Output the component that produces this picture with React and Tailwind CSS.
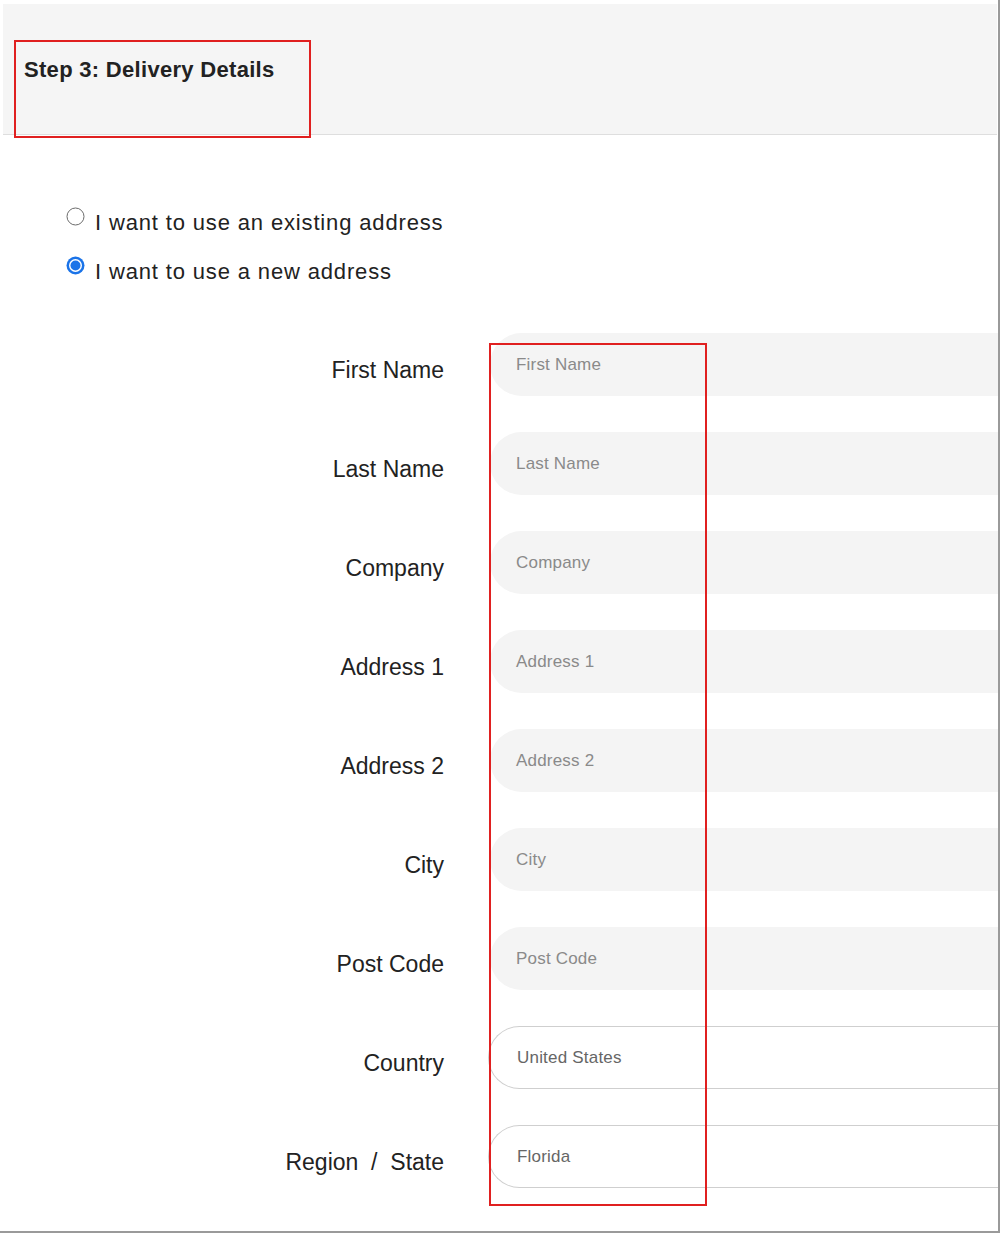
import React from "react";

const fields = ["First Name", "Last Name", "Company", "Address 1", "Address 2", "City", "Post Code"];
const selects = [
  ["Country", "United States"],
  ["Region / State", "Florida"],
];

function Radio({ checked }) {
  return checked ? (
    <svg width="19" height="19" viewBox="0 0 19 19" className="shrink-0">
      <circle cx="9.5" cy="9.5" r="9" fill="#1a73e8" />
      <circle cx="9.5" cy="9.5" r="6.5" fill="#fff" />
      <circle cx="9.5" cy="9.5" r="5" fill="#1a73e8" />
    </svg>
  ) : (
    <svg width="19" height="19" viewBox="0 0 19 19" className="shrink-0">
      <circle cx="9.5" cy="9.5" r="8.5" fill="#fff" stroke="#6b6b6b" strokeWidth="1" />
    </svg>
  );
}

export default function App() {
  return (
    <div
      className="relative w-[1000px] h-[1233px] bg-white border-r-2 border-b-2 border-[#9a9a9a] overflow-hidden text-[#222]"
      style={{ fontFamily: '"Liberation Sans", Arial, sans-serif' }}
    >
      {/* header */}
      <div className="mt-[4px] ml-[3px] mr-[1px] h-[131px] bg-[#f5f5f5] border-b border-[#dedede] pt-[55px] pl-[21px]">
        <h2 className="text-[22px] font-bold leading-none tracking-[0.3px] text-[#222]">Step 3: Delivery Details</h2>
      </div>
      <div className="absolute left-[14px] top-[40px] w-[297px] h-[98px] border-2 border-[#e02020]" />

      {/* radios */}
      <div className="mt-[77px] ml-[66px] flex flex-col gap-[27px]">
        <label className="flex items-start gap-[10px] text-[22px] leading-[22px] tracking-[0.85px]">
          <span className="-mt-[5px]"><Radio /></span>
          <span>I want to use an existing address</span>
        </label>
        <label className="flex items-start gap-[10px] text-[22px] leading-[22px] tracking-[0.85px]">
          <span className="-mt-[5px]"><Radio checked /></span>
          <span>I want to use a new address</span>
        </label>
      </div>

      {/* form */}
      <div className="mt-[50px] flex flex-col gap-[36px]">
        {fields.map((f) => (
          <div key={f} className="flex items-center">
            <div className="w-[444px] text-right text-[23px] leading-[26px] pt-[10px] text-[#222]">{f}</div>
            <div className="ml-[46px] flex-1 h-[63px] rounded-l-full bg-[#f4f4f4] flex items-center pl-[26px] text-[17px] tracking-[0.2px] text-[#8a8a8a]">
              {f}
            </div>
          </div>
        ))}
        {selects.map(([l, v]) => (
          <div key={l} className="flex items-center">
            <div className="w-[444px] text-right text-[23px] leading-[26px] pt-[10px] text-[#222] whitespace-pre">
              {l.replace(" / ", "  /  ")}
            </div>
            <div className="ml-[44px] flex-1 h-[63px] rounded-l-full bg-white border border-r-0 border-[#cfcfcf] flex items-center pl-[28px] text-[17px] tracking-[0.2px] text-[#666]">
              {v}
            </div>
          </div>
        ))}
      </div>
      <div className="absolute left-[489px] top-[343px] w-[218px] h-[863px] border-2 border-[#e02020]" />
    </div>
  );
}
